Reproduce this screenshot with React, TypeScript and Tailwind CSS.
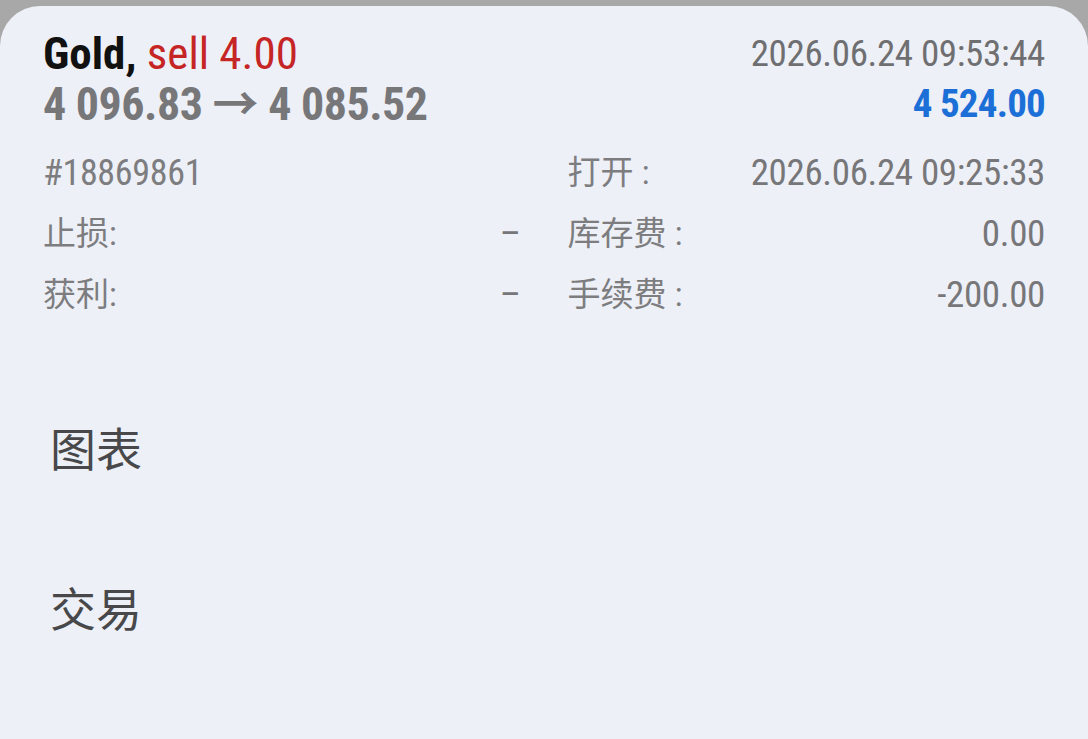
import React from "react";

const num = { fontFamily: '"Roboto Condensed", Roboto, "Noto Sans CJK SC", sans-serif' };
const cjk = { fontFamily: 'Roboto, "Noto Sans CJK SC", sans-serif' };

type Field = { label: string; value: string; id?: boolean };

const details: [Field, Field][] = [
  [{ label: "#18869861", value: "", id: true }, { label: "打开 :", value: "2026.06.24 09:25:33" }],
  [{ label: "止损:", value: "–" }, { label: "库存费 :", value: "0.00" }],
  [{ label: "获利:", value: "–" }, { label: "手续费 :", value: "-200.00" }],
];

const Cell = ({ label, value, id }: Field) => (
  <div className="flex items-center justify-between h-[61px]">
    {id ? (
      <span className="text-[36px] text-[#7d7d80] font-stretch-condensed tracking-[-0.3px]" style={num}>
        {label}
      </span>
    ) : (
      <span className="text-[33px] text-[#7d7d80] whitespace-pre" style={cjk}>
        {label}
      </span>
    )}
    <span className="text-[37px] text-[#77777a] font-stretch-condensed tracking-[-0.35px]" style={num}>
      {value}
    </span>
  </div>
);

export default function App() {
  return (
    <div className="w-full h-[739px] bg-[#a8a8a8] pt-[6px] overflow-hidden">
      <div className="h-full bg-[#edf0f7] rounded-t-[40px] px-[43px] pt-[24px]">
        {/* trade header */}
        <div className="flex justify-between">
          <div className="font-stretch-condensed" style={num}>
            <div className="text-[45px] leading-[48px]">
              <span className="font-bold text-[#111]">Gold, </span>
              <span className="text-[#c62525]">sell 4.00</span>
            </div>
            <div className="text-[46px] leading-[52px] font-bold text-[#77777a] tracking-[-0.5px]">4 096.83 → 4 085.52</div>
          </div>
          <div className="text-right font-stretch-condensed" style={num}>
            <div className="text-[37px] leading-[48px] text-[#6f6f72] tracking-[-0.35px]">2026.06.24 09:53:44</div>
            <div className="text-[39px] leading-[52px] font-bold text-[#1c6fd6] tracking-[-0.8px]">4 524.00</div>
          </div>
        </div>

        {/* order details */}
        <div className="grid grid-cols-2 gap-x-[47px] mt-[12px]">
          {details.map(([left, right], i) => (
            <React.Fragment key={i}>
              <Cell {...left} />
              <Cell {...right} />
            </React.Fragment>
          ))}
        </div>

        {/* actions */}
        <div className="mt-[100px] pl-[7px] text-[46px] text-[#48484b]" style={cjk}>
          <div className="h-[160px] leading-[50px]">图表</div>
          <div className="leading-[50px]">交易</div>
        </div>
      </div>
    </div>
  );
}
